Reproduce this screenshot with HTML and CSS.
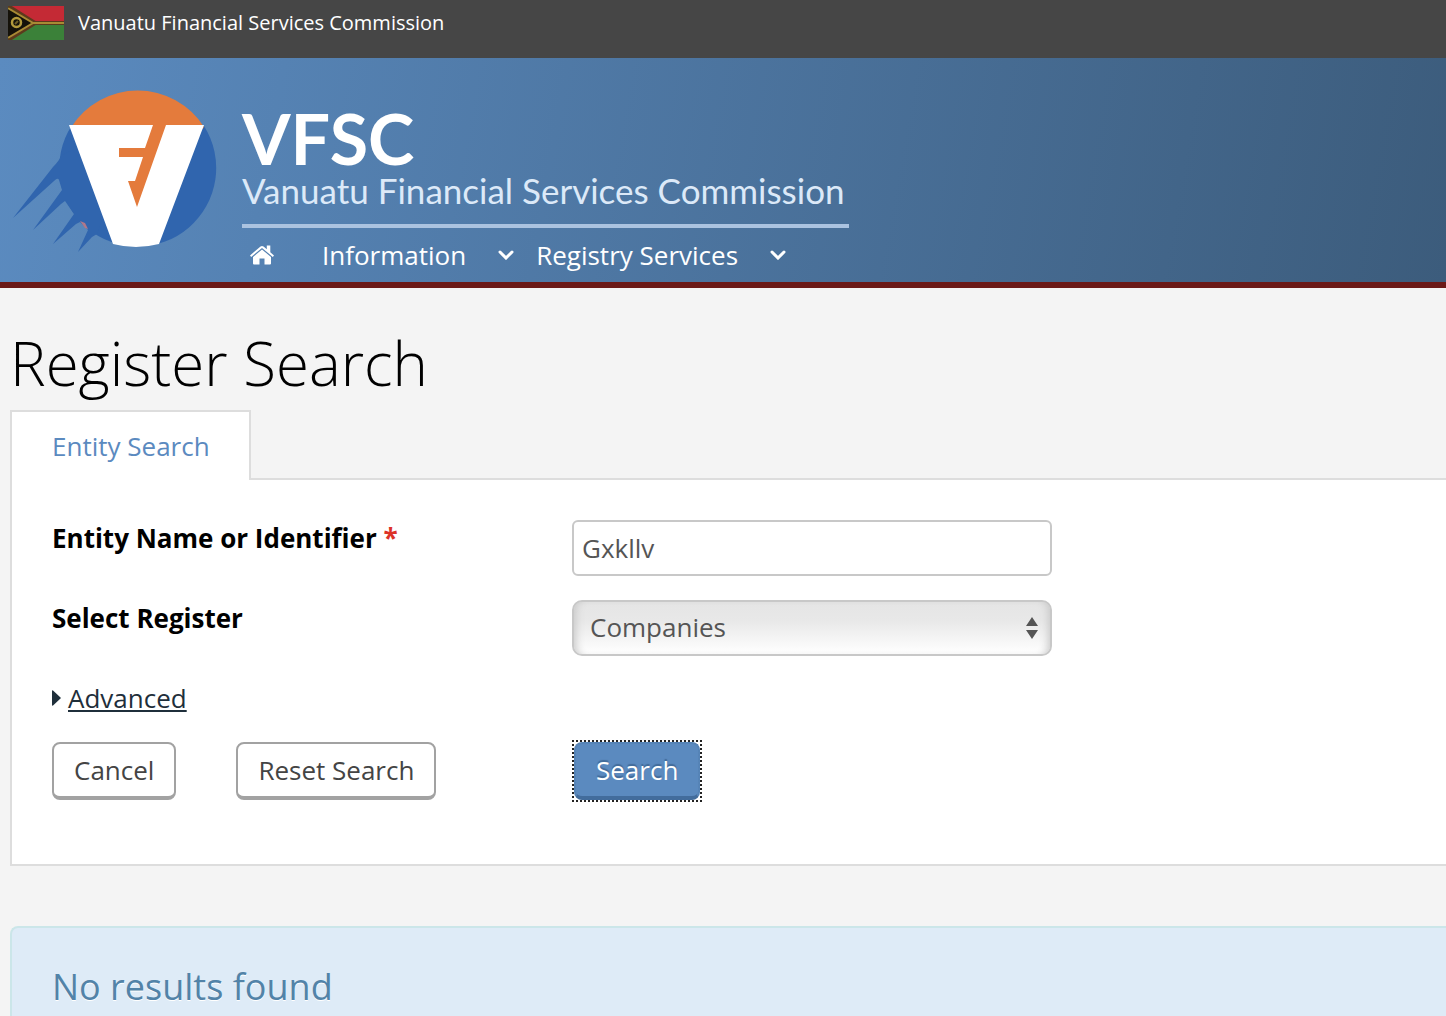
FILE: index.html
```html
<!DOCTYPE html>
<html lang="en">
<head>
<meta charset="utf-8">
<title>Register Search</title>
<link rel="stylesheet" href="styles.css">
</head>
<body>
<div class="topbar">
  <svg class="flag" viewBox="0 0 56 34" aria-hidden="true">
    <path fill="#c42a35" d="M0 0h56v17H0z"/><path fill="#3b8139" d="M0 17h56v17H0z"/>
    <path d="M0 0 27 17 0 34M25 17h31" fill="none" stroke="#5c3a1c" stroke-width="4"/>
    <path fill="#15120a" d="M0 1 25 17 0 33z"/>
    <path d="M0 2 25 17 0 32M25 17h31" fill="none" stroke="#a88a34" stroke-width="2"/>
    <circle cx="8.500" cy="16.500" r="4.500" fill="none" stroke="#b39a3c" stroke-width="2.500"/>
    <path d="m7 18 3-3" stroke="#6d5d26" stroke-width="2"/>
  </svg>
  <span class="topbar-name">Vanuatu Financial Services Commission</span>
</div>
<header class="header">
  <svg class="logo" viewBox="0 0 210 166" aria-hidden="true">
    <path fill="#3065ae" d="M59.400 36A78.500 78.500 0 1 0 192 36z"/>
    <path fill="#3065ae" d="M49 66Q47 71 41 77L1 128 42 91Q46 87 47 90L50 100 21 140 49 114 53 111 62 124 41 154 64 134 68 132 76 140 66 162 80 147 85 144 100 100 60 60z"/>
    <path fill="#e47b3c" d="M59.400 37A78.500 78.500 0 0 1 192 37L125 119 100 60z"/>
    <path fill="#fff" d="M57 35h84l-8 23h-26v9h24l-8 24h-7l9 26 29-82h38L147 154Q124 160 101 154z"/>
    <path fill="#b0788a" d="m68 131 5 2 3 6-3-1z"/>
  </svg>
  <div class="header-main">
    <div class="brand">
      <div class="brand-short">VFSC</div>
      <div class="brand-full">Vanuatu Financial Services Commission</div>
    </div>
    <nav class="nav">
      <a class="home" href="#" aria-label="Home"><svg viewBox="0 0 24 20" width="24" height="20"><path fill="#fff" d="M12 4.500 21 12v6.500q0 1-1 1h-5.500v-6h-5v6H4q-1 0-1-1V12z"/><path fill="#fff" d="m0 10.500 1.200 1.400L12 3l10.800 8.900 1.200-1.400-3.700-3.200V.5h-3.500v3.800L13.500 1.400q-1.500-1-3 0z"/></svg></a>
      <a class="nav-link" href="#">Information <svg class="chev" viewBox="0 0 16 10"><path d="m2 2 6 6 6-6"/></svg></a>
      <a class="nav-link" href="#">Registry Services <svg class="chev" viewBox="0 0 16 10"><path d="m2 2 6 6 6-6"/></svg></a>
    </nav>
  </div>
</header>
<main class="main">
  <h1 class="title">Register Search</h1>
  <div class="tabs"><a class="tab" href="#">Entity Search</a></div>
  <form class="panel">
    <div class="row">
      <label class="label" for="entity">Entity Name or Identifier <span class="required">*</span></label>
      <input class="field" id="entity" type="text" value="Gxkllv">
    </div>
    <div class="row">
      <label class="label" for="register">Select Register</label>
      <div class="select-wrap">
        <select class="field select" id="register"><option>Companies</option></select>
        <svg class="arrows" viewBox="0 0 12 24" aria-hidden="true"><path fill="#555" d="m6 1 6 9H0zM0 14h12l-6 9z"/></svg>
      </div>
    </div>
    <a class="advanced" href="#"><svg viewBox="0 0 9 16" width="9" height="16" aria-hidden="true"><path fill="#1f2f3b" d="M0 1q0-1 1-.5l8 7.500-8 7.500Q0 16 0 15z"/></svg><span>Advanced</span></a>
    <div class="actions">
      <div class="secondary">
        <button class="btn" type="button">Cancel</button>
        <button class="btn" type="reset">Reset Search</button>
      </div>
      <div class="focus-ring"><button class="btn btn-primary" type="button">Search</button></div>
    </div>
  </form>
  <section class="results"><h2 class="results-title">No results found</h2></section>
</main>
</body>
</html>
```
FILE: styles.css
```css
* { box-sizing: border-box; }
body {
  margin: 0;
  min-height: 100vh;
  display: flex;
  flex-direction: column;
  background: #f4f4f4;
  color: #000;
  font: 26px/36px "Open Sans", "Noto Sans", sans-serif;
}
a { color: inherit; text-decoration: none; }
.topbar {
  display: flex;
  gap: 14px;
  padding: 6px 8px 18px;
  background: #464646;
  color: #fff;
  font-size: 20px;
  font-weight: 500;
  line-height: 34px;
}
.flag { width: 56px; height: 34px; }
.header {
  display: flex;
  gap: 20px;
  padding: 32px 12px 0;
  border-bottom: 6px solid #6b1917;
  background: linear-gradient(100deg, #5b8bc0 0%, #3c5c7c 100%);
  color: #fff;
}
.logo { flex: none; width: 210px; height: 166px; }
.brand { padding: 14px 0 16px; border-bottom: 4px solid #abc3e0; white-space: nowrap; width: 607px; }
.brand-short { font: 700 70px/68px Lato, sans-serif; }
.brand-full { color: #dce9f8; font: 400 35px/36px Lato, sans-serif; }
.nav { display: flex; align-items: center; height: 54px; padding-left: 8px; font-weight: 500; }
.home { display: flex; width: 72px; }
.nav-link { display: flex; align-items: center; gap: 32px; margin-right: 22px; }
.chev { width: 16px; height: 10px; fill: none; stroke: #fff; stroke-width: 3; stroke-linecap: round; }
.main { flex: 1; display: flex; flex-direction: column; padding: 36px 0 0 10px; }
.title { margin: 0; font-size: 60px; font-weight: 300; line-height: 78px; }
.tabs { display: flex; margin-top: 8px; }
.tab {
  position: relative;
  z-index: 1;
  margin-bottom: -2px;
  padding: 16px 39px 16px 40px;
  border: 2px solid #ddd;
  border-bottom: 0;
  background: #fff;
  color: #5b8abf;
  white-space: nowrap;
}
.panel { padding: 40px 40px 64px; border: 2px solid #ddd; border-right: 0; background: #fff; }
.row { display: flex; height: 80px; }
.label { width: 520px; font-weight: 700; }
.required { color: #dc3228; }
.field {
  width: 480px;
  height: 56px;
  padding: 0 8px;
  border: 2px solid #c8c8c8;
  border-radius: 6px;
  background: #fff;
  color: #555;
  font: inherit;
}
.select-wrap { position: relative; }
.select {
  appearance: none;
  padding: 0 16px 2px;
  border-radius: 10px;
  background: linear-gradient(#e5e5e5, #e8e8e8 35%, #fff);
  box-shadow: inset 8px 0 8px -6px #c8c8c8, inset -8px 0 8px -6px #c8c8c8;
}
.arrows { position: absolute; top: 16px; right: 14px; width: 12px; height: 24px; pointer-events: none; }
.advanced { display: flex; width: max-content; align-items: center; gap: 7px; color: #1f2f3b; }
.advanced span { text-decoration: underline; text-decoration-thickness: 2px; text-underline-offset: 2px; }
.actions { display: flex; margin-top: 26px; align-items: center; }
.secondary { display: flex; gap: 60px; width: 520px; }
.btn {
  display: block;
  padding: 8px 20px;
  border: 2px solid #a2a2a2;
  border-bottom-width: 4px;
  border-radius: 8px;
  background: #fff;
  color: #444;
  font: inherit;
}
.focus-ring { margin: -2px 0; border: 2px dotted #222; }
.btn-primary {
  border-color: #5684b7 #5684b7 #426c9c;
  background: #5b8abf;
  color: #fff;
  font-weight: 500;
  text-shadow: 0 -2px 1px #416a98;
}
.results {
  flex: 1;
  margin-top: 60px;
  padding: 32px 40px 0;
  border: 2px solid #cbe6e9;
  border-width: 2px 0 0 2px;
  border-radius: 8px 0 0 0;
  background: #deebf7;
}
.results-title { margin: 0; color: #5283a8; font-size: 36px; font-weight: 400; line-height: 54px; text-shadow: 0 1px #fff; }
```
